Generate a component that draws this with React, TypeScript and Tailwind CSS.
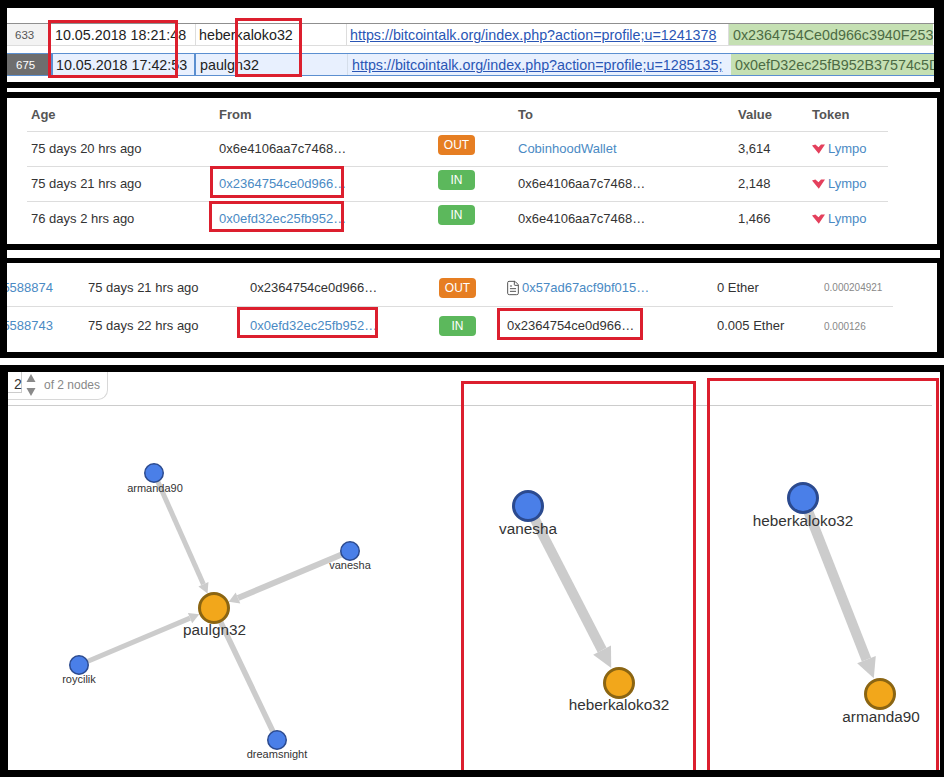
import { FileText } from "lucide-react";

const font = "font-['Liberation_Sans',Arial,sans-serif]";

function RedBox({ className }: { className: string }) {
  return <div className={`absolute border-[3px] border-[#dc1f2e] pointer-events-none ${className}`} />;
}

function Badge({ kind }: { kind: "IN" | "OUT" }) {
  return (
    <span
      className={
        kind === "OUT"
          ? "flex items-center justify-center w-[37px] h-[20px] rounded-[4px] bg-[#e67e22] text-white text-[12px] leading-none"
          : "flex items-center justify-center w-[37px] h-[20px] rounded-[4px] bg-[#5cb85c] text-white text-[12px] leading-none"
      }
    >
      {kind}
    </span>
  );
}

function LympoMark() {
  return (
    <svg width="13" height="10" viewBox="0 0 13 10" className="shrink-0">
      <path d="M0 1.6 L3.4 0.6 L6.5 3.2 L9 0.4 L13 0.6 L6.8 9.8 Z" fill="#e4405c" />
    </svg>
  );
}

function Lympo() {
  return (
    <span className="flex items-center gap-[3px] text-[#4a8ac4]">
      <LympoMark />
      Lympo
    </span>
  );
}

const tokenRows = [
  { age: "75 days 20 hrs ago", from: "0x6e4106aa7c7468…", fromLink: false, kind: "OUT" as const, to: "CobinhoodWallet", toLink: true, value: "3,614" },
  { age: "75 days 21 hrs ago", from: "0x2364754ce0d966…", fromLink: true, kind: "IN" as const, to: "0x6e4106aa7c7468…", toLink: false, value: "2,148" },
  { age: "76 days 2 hrs ago", from: "0x0efd32ec25fb952…", fromLink: true, kind: "IN" as const, to: "0x6e4106aa7c7468…", toLink: false, value: "1,466" },
];

function Edge({ x1, y1, x2, y2, r, w, hl, hw }: { x1: number; y1: number; x2: number; y2: number; r: number; w: number; hl: number; hw: number }) {
  const len = Math.hypot(x2 - x1, y2 - y1);
  const dx = (x2 - x1) / len;
  const dy = (y2 - y1) / len;
  const tx = x2 - dx * r;
  const ty = y2 - dy * r;
  const bx = tx - dx * hl;
  const by = ty - dy * hl;
  const nx = -dy;
  const ny = dx;
  return (
    <g>
      <line x1={x1} y1={y1} x2={bx} y2={by} stroke="#cccccc" strokeWidth={w} />
      <polygon
        points={`${tx},${ty} ${bx + (nx * hw) / 2},${by + (ny * hw) / 2} ${bx - (nx * hw) / 2},${by - (ny * hw) / 2}`}
        fill="#cccccc"
      />
    </g>
  );
}

function Node({ x, y, big, orange, label, lx, ly }: { x: number; y: number; big?: boolean; orange?: boolean; label: string; lx: number; ly: number }) {
  return (
    <g>
      <circle
        cx={x}
        cy={y}
        r={big ? 14.5 : 9.25}
        fill={orange ? "#f2a71b" : "#4a7fe8"}
        stroke={orange ? "#8b6512" : "#2b4a8f"}
        strokeWidth={big ? 3 : 1.5}
      />
      <text x={lx} y={ly} textAnchor="middle" fontSize={big ? 15.3 : 11} fill="#333" fontFamily="'Liberation Sans', Arial, sans-serif">
        {label}
      </text>
    </g>
  );
}

export default function App() {
  return (
    <div className={`${font} relative w-[944px] h-[777px] bg-black overflow-hidden flex flex-col pt-2`}>
      {/* Sheet */}
      <section className="relative ml-[7px] w-[927px] h-[74px] bg-white pt-[15px] text-[14.3px] text-[#222] shrink-0">
        <div className="flex h-[23px] border-t border-t-[#8f8f8f] border-b border-b-[#dddddd] leading-[23px]">
          <div className="w-[42px] bg-[#f3f3f3] text-[#555] text-[11.5px] pl-[8px] border-r border-[#dddddd]">633</div>
          <div className="w-[147px] pl-[6px] border-r border-[#dddddd] overflow-hidden whitespace-nowrap">10.05.2018 18:21:48</div>
          <div className="w-[151px] pl-[3px] border-r border-[#dddddd] overflow-hidden whitespace-nowrap">heberkaloko32</div>
          <div className="w-[382px] pl-[3px] border-r border-[#dddddd] overflow-hidden whitespace-nowrap text-[#2a56b5] underline">
            https://bitcointalk.org/index.php?action=profile;u=1241378
          </div>
          <div className="w-[204px] pl-[4px] bg-[#c5e0b3] text-[#4c6b44] overflow-hidden whitespace-nowrap">0x2364754Ce0d966c3940F253c</div>
        </div>
        <div className="flex h-[23px] mt-[7px] border-t border-b border-[#5b8fd0] bg-[#e8f0fe] leading-[23px]">
          <div className="w-[42px] bg-[#6e6e6e] text-white text-[11.5px] pl-[9px]">675</div>
          <div className="w-[145px] ml-[2px] pl-[3px] border-x-2 border-[#5b8fd0] overflow-hidden whitespace-nowrap">10.05.2018 17:42:53</div>
          <div className="w-[152px] pl-[4px] border-r border-[#d5deea] overflow-hidden whitespace-nowrap">paulgn32</div>
          <div className="w-[383px] pl-[4px] overflow-hidden whitespace-nowrap text-[#2a56b5] underline">
            https://bitcointalk.org/index.php?action=profile;u=1285135;
          </div>
          <div className="w-[203px] pl-[4px] bg-[#c5e0b3] text-[#4c6b44] overflow-hidden whitespace-nowrap">0x0efD32ec25fB952B37574c5D</div>
        </div>
        <RedBox className="left-[41px] top-[12px] w-[130px] h-[58px]" />
        <RedBox className="left-[228px] top-[10px] w-[67px] h-[59px]" />
      </section>

      <div className="ml-[7px] mt-[6px] w-[933px] h-[4px] bg-white shrink-0" />

      {/* Token transfers */}
      <section className="relative ml-[7px] mt-[6px] w-[930px] h-[146px] bg-white pl-[20px] text-[13px] text-[#333] shrink-0">
        <div className="w-[861px]">
          <div className="grid grid-cols-[192px_219px_80px_220px_74px_76px] h-[33px] items-center font-bold text-[#555]">
            <div className="pl-[4px]">Age</div>
            <div>From</div>
            <div />
            <div>To</div>
            <div>Value</div>
            <div>Token</div>
          </div>
          {tokenRows.map((row) => (
            <div key={row.age} className="grid grid-cols-[192px_219px_80px_220px_74px_76px] h-[35px] items-center border-t border-[#dddddd]">
              <div className="pl-[4px]">{row.age}</div>
              <div className={row.fromLink ? "text-[#4a8ac4]" : ""}>{row.from}</div>
              <div className="self-start mt-[3px]">
                <Badge kind={row.kind} />
              </div>
              <div className={row.toLink ? "text-[#4a8ac4]" : ""}>{row.to}</div>
              <div>{row.value}</div>
              <Lympo />
            </div>
          ))}
        </div>
        <RedBox className="left-[203px] top-[68px] w-[134px] h-[32px]" />
        <RedBox className="left-[202px] top-[103px] w-[135px] h-[31px]" />
      </section>

      <div className="ml-[7px] mt-[6px] w-[933px] h-[8px] bg-white shrink-0" />

      {/* Transactions */}
      <section className="relative ml-[7px] mt-[5px] w-[930px] h-[89px] bg-white text-[13px] text-[#333] shrink-0">
        <div className="grid grid-cols-[81px_162px_189px_68px_210px_107px_69px] w-[886px] h-[43px] pt-[6px] items-center">
          <div className="flex justify-end overflow-hidden pr-[35px] text-[#4a8ac4]">
            <span className="shrink-0">5588874</span>
          </div>
          <div>75 days 21 hrs ago</div>
          <div>0x2364754ce0d966…</div>
          <Badge kind="OUT" />
          <div className="flex items-center gap-[1px] text-[#4a8ac4]">
            <FileText size={16} strokeWidth={1.5} color="#555555" className="shrink-0 -ml-[2px]" />
            0x57ad67acf9bf015…
          </div>
          <div>0 Ether</div>
          <div className="text-[10px] text-[#888888]">0.000204921</div>
        </div>
        <div className="grid grid-cols-[81px_162px_189px_68px_210px_107px_69px] w-[886px] h-[39px] items-center border-t border-[#dddddd]">
          <div className="flex justify-end overflow-hidden pr-[35px] text-[#4a8ac4]">
            <span className="shrink-0">5588743</span>
          </div>
          <div>75 days 22 hrs ago</div>
          <div className="text-[#4a8ac4]">0x0efd32ec25fb952…</div>
          <Badge kind="IN" />
          <div>0x2364754ce0d966…</div>
          <div>0.005 Ether</div>
          <div className="text-[10px] text-[#888888]">0.000126</div>
        </div>
        <RedBox className="left-[230px] top-[44px] w-[141px] h-[31px]" />
        <RedBox className="left-[490px] top-[45px] w-[146px] h-[32px]" />
      </section>

      <div className="mt-[6px] w-[944px] h-[7px] bg-white shrink-0" />

      {/* Graphs */}
      <section className="relative ml-[8px] mt-[7px] w-[932px] h-[398px] bg-white shrink-0 flex flex-col">
        <div className="flex items-start w-[100px] h-[28px] border-r border-b border-[#d8d8d8] rounded-br-[10px] shrink-0">
          <div className="w-[14px] h-[21px] border-r border-b border-[#cccccc] text-[14px] leading-[25px] text-[#333] pl-[6px]">2</div>
          <svg width="10" height="24" viewBox="0 0 10 24" className="ml-[4px]">
            <polygon points="5,2 9.5,10 0.5,10" fill="#8a8a8a" />
            <polygon points="0.5,16 9.5,16 5,24" fill="#8a8a8a" />
          </svg>
          <span className="ml-[8px] text-[12px] leading-[26px] text-[#888888] whitespace-nowrap">of 2 nodes</span>
        </div>
        <div className="mt-[5px] w-[924px] h-px bg-[#cccccc] shrink-0" />
        <svg width="932" height="364" viewBox="8 406 932 364" className="block shrink-0">
          <Edge x1={154} y1={473} x2={214} y2={608} r={16} w={5} hl={10} hw={11} />
          <Edge x1={350} y1={551} x2={214} y2={608} r={16} w={6} hl={10} hw={12} />
          <Edge x1={79} y1={665} x2={214} y2={608} r={16} w={5} hl={10} hw={11} />
          <line x1={277} y1={740} x2={214} y2={608} stroke="#cccccc" strokeWidth={5.5} />
          <Node x={154} y={473} label="armanda90" lx={155} ly={492} />
          <Node x={350} y={551} label="vanesha" lx={350} ly={569} />
          <Node x={79} y={665} label="roycilik" lx={79} ly={683} />
          <Node x={277} y={740} label="dreamsnight" lx={277} ly={758} />
          <Node x={214} y={608} big orange label="paulgn32" lx={214.5} ly={635} />

          <Edge x1={528} y1={506} x2={619} y2={683} r={17} w={10} hl={20} hw={20} />
          <Node x={528} y={506} big label="vanesha" lx={528} ly={534} />
          <Node x={619} y={683} big orange label="heberkaloko32" lx={619} ly={710} />

          <Edge x1={803} y1={498} x2={880} y2={694} r={17} w={10} hl={20} hw={20} />
          <Node x={803} y={498} big label="heberkaloko32" lx={803} ly={526} />
          <Node x={880} y={694} big orange label="armanda90" lx={881} ly={722} />
        </svg>
        <RedBox className="left-[453px] top-[9px] w-[235px] h-[389px] border-b-0" />
        <RedBox className="left-[699px] top-[6px] w-[232px] h-[392px] border-b-0" />
      </section>
    </div>
  );
}
